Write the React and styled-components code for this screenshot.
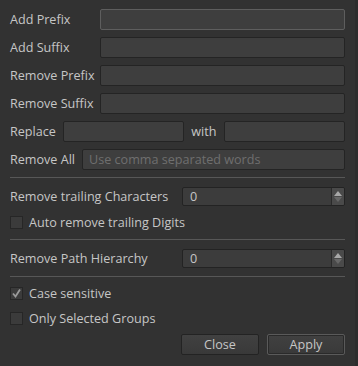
import React from "react";
import styled, { createGlobalStyle } from "styled-components";

const Global = createGlobalStyle`
  html, body { margin: 0; padding: 0; background: #2d2d2d; }
  body { width: 358px; height: 366px; overflow: hidden; }
  * { box-sizing: border-box; }
`;

const Panel = styled.div`
  width: 355px;
  height: 366px;
  background: #323232;
  padding: 9px 10px 0 10px;
  font-family: "Open Sans", "DejaVu Sans", sans-serif;
  font-size: 12.6px;
  color: #c6c6c6;
  display: flex;
  flex-direction: column;
`;

const Fields = styled.div`
  display: flex;
  flex-direction: column;
  gap: 7px;
`;

const Row = styled.div`
  display: flex;
  align-items: center;
  gap: ${(p) => p.$gap ?? 7}px;
  height: ${(p) => p.$h ?? 21}px;
  margin-top: ${(p) => p.$mt ?? 0}px;
`;

const Label = styled.span`
  flex: none;
  width: ${(p) => (p.$w ? `${p.$w}px` : "auto")};
  white-space: nowrap;
`;

const Input = styled.input`
  flex: 1;
  min-width: 0;
  height: 21px;
  background: #3e3e3e;
  border: 1px solid ${(p) => (p.$focus ? "#5e5e5e" : "#242424")};
  border-radius: 2px;
  color: #c6c6c6;
  font: inherit;
  padding: 0 6px;
  outline: none;
  &::placeholder { color: #6f6f6f; }
`;

const Divider = styled.div`
  height: 1px;
  background: #575757;
  margin-top: ${(p) => p.$mt}px;
`;

const Spin = styled.div`
  margin-left: auto;
  width: 163px;
  height: 19px;
  display: flex;
  background: #3c3c3c;
  border: 1px solid #232323;
  border-radius: 2px;
  overflow: hidden;
`;

const SpinValue = styled.span`
  flex: 1;
  padding-left: 7px;
  line-height: 17px;
  color: #c6c6c6;
`;

const SpinButtons = styled.div`
  width: 13px;
  flex: none;
  background: #4a4a4a;
  border-left: 1px solid #2a2a2a;
  display: flex;
  flex-direction: column;
  align-items: center;
  justify-content: center;
  gap: 1px;
`;

const Tri = styled.span`
  width: 0;
  height: 0;
  border-left: 4px solid transparent;
  border-right: 4px solid transparent;
  ${(p) =>
    p.$up
      ? `border-bottom: 5px solid #a8a8a8;`
      : `border-top: 5px solid #676767;`}
`;

const Check = styled.span`
  width: 13px;
  height: 13px;
  flex: none;
  background: #3b3b3b;
  border: 1px solid #262626;
  display: flex;
  align-items: center;
  justify-content: center;
`;

const Buttons = styled.div`
  display: flex;
  justify-content: flex-end;
  gap: 8px;
  margin-top: 9px;
`;

const Button = styled.button`
  width: 78px;
  height: 21px;
  background: linear-gradient(#414141, #393939);
  border: 1px solid ${(p) => (p.$default ? "#5a5a5a" : "#232323")};
  box-shadow: ${(p) => (p.$default ? "inset 0 0 0 1px #2a2a2a" : "none")};
  border-radius: 2px;
  color: #c6c6c6;
  font: inherit;
  padding: 0;
`;

function Checkbox({ checked }) {
  return (
    <Check>
      {checked && (
        <svg width="11" height="11" viewBox="0 0 11 11">
          <path d="M2 5.5 L4.5 8.5 L9 1.5" fill="none" stroke="#9a9a9a" strokeWidth="1.8" />
        </svg>
      )}
    </Check>
  );
}

function SpinBox() {
  return (
    <Spin>
      <SpinValue>0</SpinValue>
      <SpinButtons>
        <Tri $up />
        <Tri />
      </SpinButtons>
    </Spin>
  );
}

export default function App() {
  return (
    <>
      <Global />
      <Panel>
        <Fields>
          <Row>
            <Label $w={83}>Add Prefix</Label>
            <Input $focus />
          </Row>
          <Row>
            <Label $w={83}>Add Suffix</Label>
            <Input />
          </Row>
          <Row>
            <Label $w={83}>Remove Prefix</Label>
            <Input />
          </Row>
          <Row>
            <Label $w={83}>Remove Suffix</Label>
            <Input />
          </Row>
          <Row>
            <Label>Replace</Label>
            <Input />
            <Label>with</Label>
            <Input />
          </Row>
          <Row>
            <Label>Remove All</Label>
            <Input placeholder="Use comma separated words" />
          </Row>
        </Fields>
        <Divider $mt={7} />
        <Row $h={19} $mt={9}>
          <Label>Remove trailing Characters</Label>
          <SpinBox />
        </Row>
        <Row $h={13} $mt={10} $gap={6}>
          <Checkbox />
          <Label>Auto remove trailing Digits</Label>
        </Row>
        <Divider $mt={10} />
        <Row $h={19} $mt={9}>
          <Label>Remove Path Hierarchy</Label>
          <SpinBox />
        </Row>
        <Divider $mt={8} />
        <Row $h={13} $mt={10} $gap={6}>
          <Checkbox checked />
          <Label>Case sensitive</Label>
        </Row>
        <Row $h={13} $mt={12} $gap={6}>
          <Checkbox />
          <Label>Only Selected Groups</Label>
        </Row>
        <Buttons>
          <Button>Close</Button>
          <Button $default>Apply</Button>
        </Buttons>
      </Panel>
    </>
  );
}
